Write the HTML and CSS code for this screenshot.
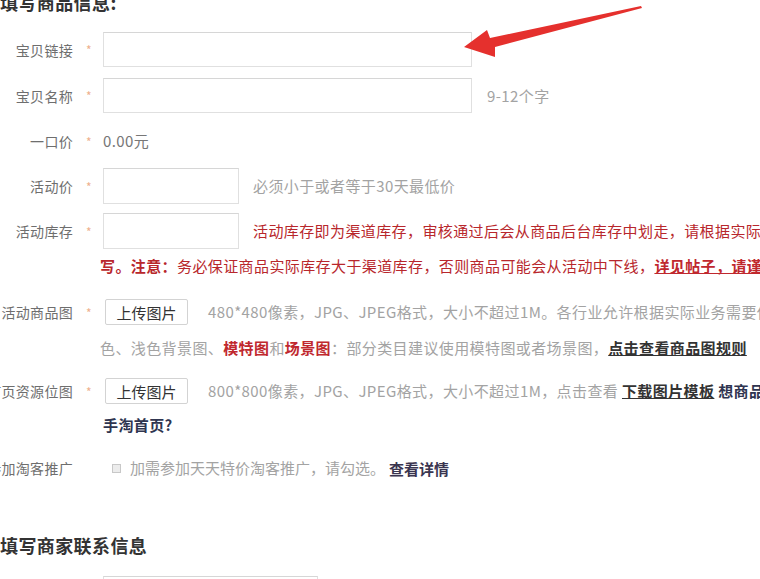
FILE: index.html
```html
<!DOCTYPE html>
<html lang="zh-CN">
<head>
<meta charset="utf-8">
<title>填写商品信息</title>
<link rel="stylesheet" href="styles.css">
</head>
<body>
<div class="page">
  <h2 class="sec-title first">填写商品信息:</h2>

  <div class="line r1">
    <div class="lbl">宝贝链接</div><div class="star">*</div>
    <input class="inp long" type="text">
  </div>

  <div class="line r2">
    <div class="lbl">宝贝名称</div><div class="star">*</div>
    <input class="inp long" type="text">
    <span class="hint gap15">9-12个字</span>
  </div>

  <div class="line r3">
    <div class="lbl">一口价</div><div class="star">*</div>
    <span class="val">0.00元</span>
  </div>

  <div class="line r4">
    <div class="lbl">活动价</div><div class="star">*</div>
    <input class="inp short" type="text">
    <span class="hint gap14">必须小于或者等于30天最低价</span>
  </div>

  <div class="line r5">
    <div class="lbl">活动库存</div><div class="star">*</div>
    <input class="inp short" type="text">
    <span class="red gap14">活动库存即为渠道库存，审核通过后会从商品后台库存中划走，请根据实际情况填</span>
  </div>
  <div class="cont c5 red"><b>写。注意：</b>务必保证商品实际库存大于渠道库存，否则商品可能会从活动中下线，<a class="ulink red-b">详见帖子，请谨慎填写</a></div>

  <div class="line r6">
    <div class="lbl">活动商品图</div><div class="star">*</div>
    <button class="btn" type="button">上传图片</button>
    <span class="hint gap20">480*480像素，JPG、JPEG格式，大小不超过1M。各行业允许根据实际业务需要使用白</span>
  </div>
  <div class="cont c6 hint">色、浅色背景图、<b class="red-b">模特图</b>和<b class="red-b">场景图</b>：部分类目建议使用模特图或者场景图，<a class="ulink dark">点击查看商品图规则</a></div>

  <div class="line r7">
    <div class="lbl">首页资源位图</div><div class="star">*</div>
    <button class="btn" type="button">上传图片</button>
    <span class="hint gap20">800*800像素，JPG、JPEG格式，大小不超过1M，点击查看 <a class="ulink dark">下载图片模板</a> <b class="navy">想商品免费上</b></span>
  </div>
  <div class="cont c7"><b class="navy">手淘首页?</b></div>

  <div class="line r8">
    <div class="lbl">参加淘客推广</div>
    <span class="chk"></span>
    <span class="hint tight">加需参加天天特价淘客推广，请勾选。</span>
    <b class="more">查看详情</b>
  </div>

  <h2 class="sec-title second">填写商家联系信息</h2>

  <div class="line r9">
    <div class="lbl"></div><div class="star"></div>
    <input class="inp mid" type="text">
  </div>

  <svg class="arrow" width="760" height="80" viewBox="0 0 760 80" aria-hidden="true">
    <polygon points="464,47 487,30 490,38 641,6 642,8 495,47 495,57" fill="#e5302d"/>
  </svg>
</div>
</body>
</html>
```

FILE: styles.css
```css
html, body {
  margin: 0;
  padding: 0;
  background: #fff;
  overflow: hidden;
}
body {
  width: 760px;
  height: 579px;
  font-family: "Noto Sans CJK SC", "Noto Sans", sans-serif;
  color: #666;
}
.page {
  position: relative;
  width: 1100px;
  white-space: nowrap;
  display: flex;
  flex-direction: column;
}
.sec-title {
  margin: 0;
  font-size: 18px;
  font-weight: bold;
  color: #333;
  height: 26px;
  line-height: 26px;
  letter-spacing: 0.4px;
}
.sec-title.first { margin-top: -11px; }
.sec-title.second { margin-top: 54px; }

.line {
  display: flex;
  align-items: center;
}
.lbl {
  width: 73px;
  flex: 0 0 73px;
  display: flex;
  justify-content: flex-end;
  font-size: 14px;
  letter-spacing: 0.3px;
  color: #6e6e6e;
}
.star {
  width: 30px;
  flex: 0 0 30px;
  box-sizing: border-box;
  padding-left: 13px;
  color: #eeb08e;
  font-size: 12px;
}
.inp {
  box-sizing: border-box;
  border: 1px solid #e0e0e0;
  border-top-color: #d6d6d6;
  background: #fff;
  margin: 0;
  padding: 0;
  height: 35px;
}
.inp.long { width: 369px; }
.inp.short { width: 136px; height: 36px; }
.inp.mid { width: 215px; }

.hint, .val, .red, .cont {
  font-size: 15px;
  letter-spacing: 0.4px;
  line-height: 20px;
}
.hint { color: #a3a3a3; }
.hint.tight { letter-spacing: 0; }
.val { color: #777; }
.red { color: #b8272c; }
.red-b { color: #c0282e; font-weight: bold; }
.dark { color: #333; font-weight: bold; }
.navy { color: #2f3550; font-weight: bold; }
.ulink { text-decoration: underline; }

.gap14 { margin-left: 14px; }
.gap15 { margin-left: 15px; }
.gap20 { margin-left: 20px; }

.btn {
  box-sizing: border-box;
  margin: 0 0 0 2px;
  width: 83px;
  height: 26px;
  padding: 0;
  border: 1px solid #d3d3d3;
  border-radius: 2px;
  background: #fff;
  font-family: inherit;
  font-size: 15px;
  color: #333;
}

.cont { padding-left: 100px; height: 20px; }

.r1 { margin-top: 17px; height: 35px; }
.r2 { margin-top: 11px; height: 35px; }
.r3 { margin-top: 13px; height: 30px; }
.r4 { margin-top: 12px; height: 36px; }
.r5 { margin-top: 9px; height: 36px; }
.c5 { margin-top: 7px; }
.r6 { margin-top: 23px; height: 26px; }
.c6 { margin-top: 13px; }
.r7 { margin-top: 20px; height: 26px; }
.c7 { margin-top: 11px; padding-left: 103px; }
.r8 { margin-top: 23px; height: 20px; }
.r9 { margin-top: 18px; }

.chk {
  box-sizing: border-box;
  width: 9px;
  height: 9px;
  margin: 0 9px 0 39px;
  border: 1px solid #c8c8c8;
  background: #ececec;
}
.more {
  margin-left: 4px;
  font-size: 15px;
  color: #3a3550;
}

.arrow {
  position: absolute;
  left: 0;
  top: 0;
  pointer-events: none;
}
```
